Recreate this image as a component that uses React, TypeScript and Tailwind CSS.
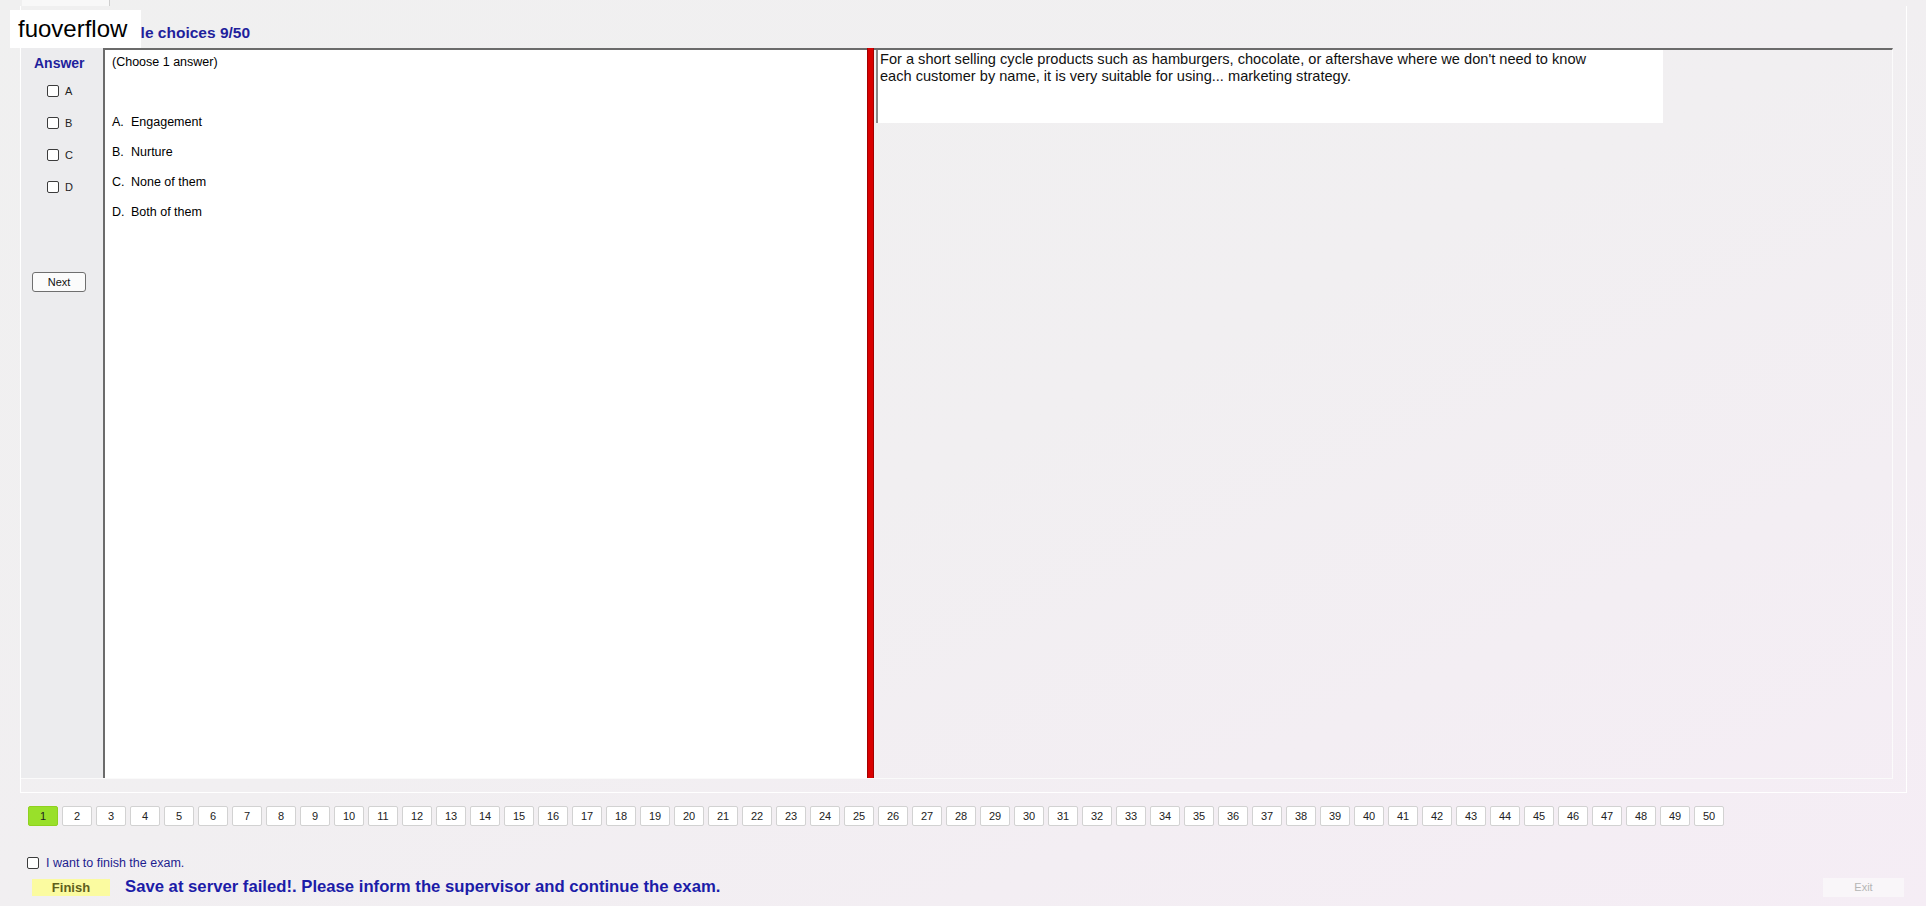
const OPTIONS = [
  { key: 'A', text: 'Engagement' },
  { key: 'B', text: 'Nurture' },
  { key: 'C', text: 'None of them' },
  { key: 'D', text: 'Both of them' },
];

const PAGES = Array.from({ length: 50 }, (_, i) => i + 1);

function Box() {
  return <span className="block w-[12px] h-[12px] rounded-[2px] border border-[#3c3c3c] bg-white" />;
}

export default function App() {
  return (
    <div className="relative w-[1926px] h-[906px] overflow-hidden flex flex-col bg-linear-to-br from-[#f0f0f0] via-[#f1eff1] to-[#f5edf5] font-['Liberation_Sans',Arial,sans-serif] text-black">
      {/* top tab strip */}
      <div className="h-[6px] flex pl-[22px]">
        <div className="w-[88px] h-full bg-[#f8f8f8] border-r border-[#cfcfcf]" />
      </div>

      {/* main frame */}
      <div className="ml-[20px] w-[1887px] pr-[13px] flex flex-col border-l border-b border-r border-white">
        {/* title */}
        <div className="h-[42px] flex items-end pb-[8px] pl-[74px]">
          <span className="text-[15.5px] leading-[15px] font-bold text-[#1f1f9c]">Multiple choices 9/50</span>
        </div>

        <div className="h-[730px] flex">
          {/* answer column */}
          <div className="w-[82px] bg-[#e9e9ed]/60 flex flex-col pt-[8px]">
            <span className="pl-[13px] text-[14px] leading-[15px] font-bold text-[#1f1f9c]">Answer</span>
            <div className="mt-[14px] flex flex-col gap-[20px] pl-[26px]">
              {OPTIONS.map((o) => (
                <div key={o.key} className="flex items-center h-[12px] gap-[6px]">
                  <Box />
                  <span className="text-[11px] leading-[12px] text-[#222]">{o.key}</span>
                </div>
              ))}
            </div>
            <button className="mt-[79px] ml-[11px] w-[54px] h-[20px] rounded-[3px] border border-[#6f6f6f] bg-[#fbfbfb] text-[11px] leading-[18px] text-[#111]">
              Next
            </button>
          </div>

          {/* question box */}
          <div className="w-[764px] bg-white border-t-2 border-l-2 border-[#6b6b6b] pl-[7px] pt-[5px] flex flex-col">
            <span className="text-[12.5px] leading-[14px]">(Choose 1 answer)</span>
            <div className="mt-[46px] flex flex-col gap-[16px]">
              {OPTIONS.map((o) => (
                <div key={o.key} className="flex text-[12.5px] leading-[14px]">
                  <span className="w-[19px]">{o.key}.</span>
                  <span>{o.text}</span>
                </div>
              ))}
            </div>
          </div>

          {/* red splitter */}
          <div className="w-[7px] bg-[#d90000] border-l border-r border-[#a30000]" />

          {/* right area */}
          <div className="flex-1 border-t-2 border-[#6b6b6b] border-r border-r-[#fbfbfb] flex items-start pl-[2px]">
            <div className="w-[787px] h-[73px] bg-white border-l-2 border-[#8a8a8a] pl-[2px] pt-[1px] text-[14.6px] leading-[17px] text-[#111]">
              <p>For a short selling cycle products such as hamburgers, chocolate, or aftershave where we don&apos;t need to know</p>
              <p>each customer by name, it is very suitable for using... marketing strategy.</p>
            </div>
          </div>
        </div>
        <div className="h-[14px] border-t border-[#fafafa]" />
      </div>

      {/* page numbers */}
      <div className="mt-[13px] pl-[28px] flex gap-[4px]">
        {PAGES.map((n) => (
          <button
            key={n}
            className={
              n === 1
                ? 'w-[30px] h-[20px] rounded-[2px] border border-[#8fd11f] bg-[#99e02a] text-[11px] text-[#222]'
                : 'w-[30px] h-[20px] rounded-[2px] border border-[#d2d2d2] bg-white text-[11px] text-[#222]'
            }
          >
            {n}
          </button>
        ))}
      </div>

      {/* finish */}
      <div className="mt-[31px] pl-[27px] flex items-center gap-[7px] h-[12px]">
        <Box />
        <span className="text-[12.5px] leading-[14px] text-[#1d1d8f]">I want to finish the exam.</span>
      </div>
      <div className="mt-[9px] flex items-center h-[18px]">
        <button className="ml-[32px] w-[78px] h-[17px] bg-[#fbfba0] text-[13px] leading-[17px] font-bold text-[#5f5f1c]">
          Finish
        </button>
        <span className="ml-[15px] text-[16.7px] leading-[18px] font-bold text-[#1c1ca8]">
          Save at server failed!. Please inform the supervisor and continue the exam.
        </span>
        <button className="ml-auto mr-[22px] w-[81px] h-[19px] bg-[#f9f6f9] text-[11px] text-[#b5b5b5]">Exit</button>
      </div>

      {/* watermark */}
      <div className="absolute left-[10px] top-[10px] w-[131px] h-[38px] bg-white pl-[8px] flex items-center">
        <span className="text-[24px] leading-[28px] text-black">fuoverflow</span>
      </div>
    </div>
  );
}
